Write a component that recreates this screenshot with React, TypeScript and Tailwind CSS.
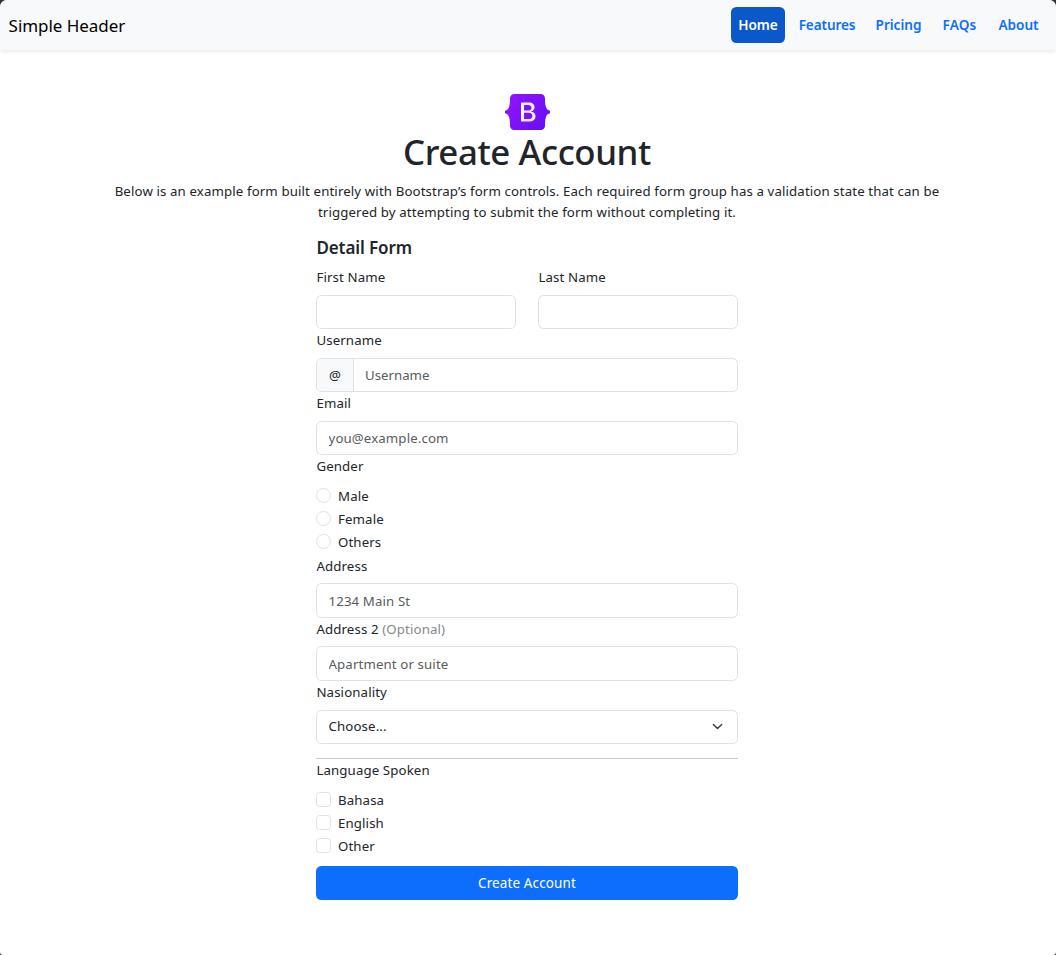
import React from "react";

const navItems = [
  { label: "Home", className: "w-[54px] bg-[#0a58ca] text-white" },
  { label: "Features", className: "w-[70px] text-[#0d6efd] tracking-[-0.01em]" },
  { label: "Pricing", className: "w-[59px] text-[#0d6efd]" },
  { label: "FAQs", className: "w-[49px] text-[#0d6efd] tracking-[0.01em]" },
  { label: "About", className: "w-[55px] text-[#0d6efd]" },
];

const control =
  "block h-[34.2px] w-full rounded-[5.4px] border border-[#dee2e6] bg-white px-[11.5px] tracking-[0.12px] text-[#212529] outline-none placeholder:text-[#595c5f] placeholder:opacity-100";

function Logo() {
  return (
    <svg className="block h-9 w-[45px]" viewBox="0 0 118 94" role="img" aria-label="Bootstrap">
      <defs>
        <linearGradient id="badge" x1="8" y1="11" x2="110" y2="90" gradientUnits="userSpaceOnUse">
          <stop stopColor="#9013fe" />
          <stop offset="1" stopColor="#6610f2" />
        </linearGradient>
        <linearGradient id="mark" x1="42" y1="22" x2="70" y2="70" gradientUnits="userSpaceOnUse">
          <stop stopColor="#fff" />
          <stop offset="1" stopColor="#f1e5fc" />
        </linearGradient>
      </defs>
      <rect x="36" y="18" width="50" height="58" fill="url(#mark)" />
      <path
        fill="url(#badge)"
        fillRule="evenodd"
        clipRule="evenodd"
        d="M24.509 0c-6.733 0-11.715 5.893-11.492 12.284.214 6.14-.064 14.092-2.066 20.577C8.943 39.365 5.547 43.485 0 44.014v5.972c5.547.529 8.943 4.649 10.951 11.153 2.002 6.485 2.28 14.437 2.066 20.577C12.794 88.106 17.776 94 24.51 94H93.5c6.733 0 11.714-5.893 11.491-12.284-.214-6.14.064-14.092 2.066-20.577 2.009-6.504 5.396-10.624 10.943-11.153v-5.972c-5.547-.529-8.934-4.649-10.943-11.153-2.002-6.484-2.28-14.437-2.066-20.577C105.214 5.894 100.233 0 93.5 0H24.508zM80 57.863C80 66.663 73.436 72 62.543 72H44a2 2 0 01-2-2V24a2 2 0 012-2h18.437c9.083 0 15.044 4.92 15.044 12.474 0 5.302-4.01 10.049-9.119 10.88v.277C75.317 46.394 80 51.21 80 57.863zM60.521 28.34H49.948v14.934h8.905c6.884 0 10.68-2.772 10.68-7.727 0-4.643-3.264-7.207-9.012-7.207zM49.948 49.2v16.458H60.91c7.167 0 10.964-2.876 10.964-8.281 0-5.406-3.903-8.178-11.425-8.178H49.948z"
      />
    </svg>
  );
}

function Field({ label, hint, children }: { label: string; hint?: string; children: React.ReactNode }) {
  return (
    <div className="w-full">
      <label className="mb-[6.2px] block pt-px pl-[0.4px]">
        {label}
        {hint && <span className="text-[#85898d]"> {hint}</span>}
      </label>
      {children}
    </div>
  );
}

function Choices({ type, options }: { type: "radio" | "checkbox"; options: string[] }) {
  return (
    <div className="pt-[0.2px] pb-[0.15px]">
      {options.map((option) => (
        <label key={option} className="mb-[1.8px] flex items-center gap-[7px]">
          <input
            type={type}
            name={type}
            className={
              type === "radio"
                ? "size-[15px] appearance-none rounded-full border border-[#dee2e6] bg-white"
                : "size-[15px] appearance-none rounded-[3.6px] border border-[#dee2e6] bg-white"
            }
          />
          <span className="-mb-[1.3px] pt-[1.3px]">{option}</span>
        </label>
      ))}
    </div>
  );
}

export default function App() {
  return (
    <div className="h-[955px] w-full bg-[#333]">
      <div className="flex h-full flex-col overflow-hidden rounded-t-[7px] rounded-b-[3px] bg-white font-['Noto_Sans','Open_Sans',sans-serif] text-[13.25px] leading-[21.6px] tracking-[0.12px] text-[#212529]">
        <header className="flex h-[50px] shrink-0 items-center justify-between bg-[#f8f9fa] pr-[10px] pl-[8.6px] shadow-[0_2px_4px_rgba(0,0,0,0.075)]">
          <span className="pt-0.5 text-[17px] tracking-[-0.05px] text-black">Simple Header</span>
          <nav className="flex gap-[7px] tracking-normal">
            {navItems.map((item) => (
              <a
                key={item.label}
                href="#"
                className={`flex h-9 items-center justify-center rounded-[5.4px] text-[13.6px] font-semibold ${item.className}`}
              >
                {item.label}
              </a>
            ))}
          </nav>
        </header>

        <main className="flex flex-col items-center pt-[43.6px] pr-0.5">
          <Logo />
          <h1 className="mb-[7.8px] text-[34.8px] leading-[43.2px] font-medium tracking-[-0.4px]">Create Account</h1>
          <p className="mb-[13.8px] text-center whitespace-nowrap">
            Below is an example form built entirely with Bootstrap’s form controls. Each required form group has a
            validation state that can be
            <br />
            triggered by attempting to submit the form without completing it.
          </p>

          <form className="w-[422px]" onSubmit={(event) => event.preventDefault()}>
            <h2 className="-mt-[0.6px] mb-[7.8px] pl-[0.4px] text-[17px] leading-[21.6px] font-semibold tracking-[-0.1px]">
              Detail Form
            </h2>
            <div className="grid grid-cols-2 gap-[22px]">
              <Field label="First Name">
                <input className={control} />
              </Field>
              <Field label="Last Name">
                <input className={control} />
              </Field>
            </div>
            <Field label="Username">
              <div className="flex h-[34.2px] overflow-hidden rounded-[5.4px] border border-[#dee2e6]">
                <span className="flex w-[37px] items-center justify-center border-r border-[#dee2e6] bg-[#f8f9fa] pt-px">
                  @
                </span>
                <input
                  placeholder="Username"
                  className="grow px-[11px] pt-px tracking-normal outline-none placeholder:text-[#595c5f] placeholder:opacity-100"
                />
              </div>
            </Field>
            <Field label="Email">
              <input className={control} placeholder="you@example.com" />
            </Field>
            <Field label="Gender">
              <Choices type="radio" options={["Male", "Female", "Others"]} />
            </Field>
            <Field label="Address">
              <input className={`${control} pt-px`} placeholder="1234 Main St" />
            </Field>
            <div className="pt-[0.1px]">
              <Field label="Address 2" hint="(Optional)">
                <input className={`${control} pt-px`} placeholder="Apartment or suite" />
              </Field>
            </div>
            <div className="pt-[0.3px]">
              <Field label="Nasionality">
                <button type="button" className={`${control} flex items-center justify-between`}>
                  <span className="pt-px">Choose...</span>
                  <svg
                    className="mr-[2.5px] size-[11px]"
                    viewBox="0 0 16 16"
                    fill="none"
                    stroke="#343a40"
                    strokeWidth="2"
                    strokeLinecap="round"
                    strokeLinejoin="round"
                  >
                    <path d="m2 5 6 6 6-6" />
                  </svg>
                </button>
              </Field>
            </div>
            <hr className="mt-[14.4px] border-t border-[#c8c9ca]" />
            <Field label="Language Spoken">
              <Choices type="checkbox" options={["Bahasa", "English", "Other"]} />
            </Field>
            <button
              type="submit"
              className="mt-[7.2px] h-[34.2px] w-full rounded-[5.4px] bg-[#0d6efd] pt-px text-[13.5px] tracking-[0.12px] text-white"
            >
              Create Account
            </button>
          </form>
        </main>
      </div>
    </div>
  );
}
